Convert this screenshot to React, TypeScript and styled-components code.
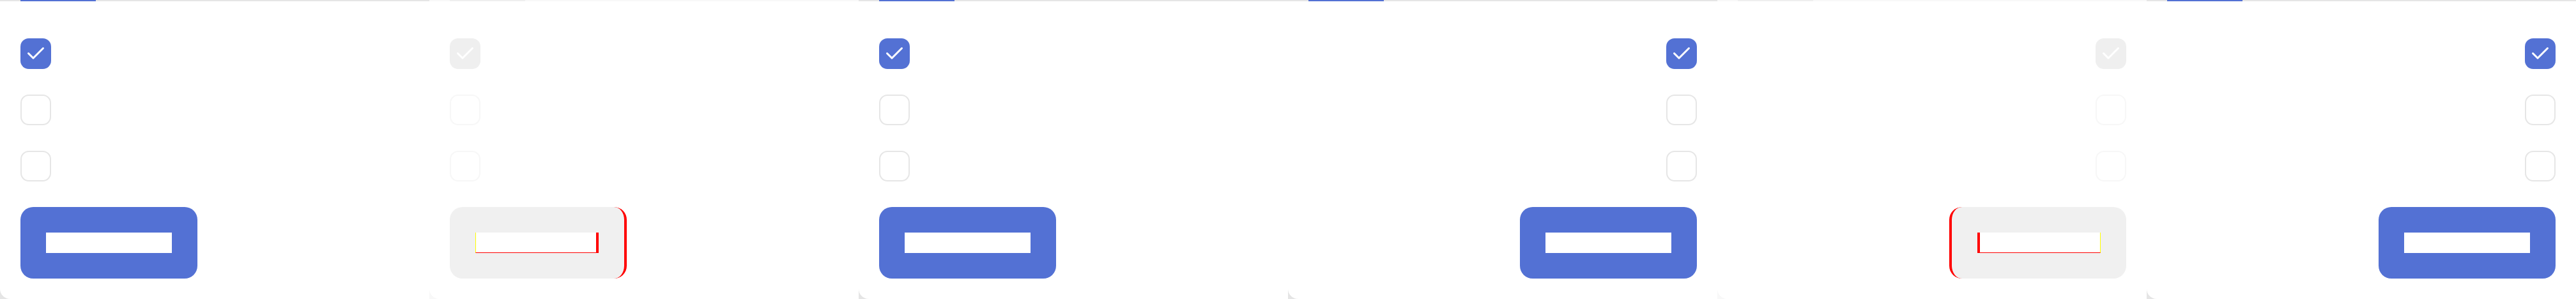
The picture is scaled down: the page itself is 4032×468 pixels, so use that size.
import React from "react";
import styled, { createGlobalStyle, css } from "styled-components";

const GlobalStyle = createGlobalStyle`
  html, body { margin: 0; padding: 0; background: #ffffff; }
  body { font-family: "Inter", "Liberation Sans", sans-serif; }
`;

const Row = styled.div`
  display: flex;
  width: 4032px;
  height: 468px;
`;

const Panel = styled.section<{ $muted: boolean }>`
  width: 672px;
  height: 468px;
  display: flex;
  flex-direction: column;
  background: ${(p) => (p.$muted ? "#f8f8f8" : "#e5e5e5")};
  flex-shrink: 0;
`;

const Track = styled.div<{ $muted: boolean }>`
  height: 2px;
  display: flex;
  direction: ltr;
  background: ${(p) => (p.$muted ? "#f8f8f8" : "#e5e5e5")};
`;

const Indicator = styled.div<{ $muted: boolean }>`
  margin-left: 32px;
  width: 118px;
  height: 2px;
  background: ${(p) => (p.$muted ? "#efefef" : "#5371d4")};
`;

const Card = styled.div`
  flex: 1;
  background: #ffffff;
  border-bottom-left-radius: 16px;
  display: flex;
  flex-direction: column;
  align-items: flex-start;
  padding: 58px 32px 0;
  gap: 40px;
`;

const Box = styled.span<{ $checked: boolean; $muted: boolean }>`
  box-sizing: border-box;
  width: 48px;
  height: 48px;
  border-radius: 13px;
  display: flex;
  align-items: center;
  justify-content: center;
  ${(p) =>
    p.$checked
      ? css`
          background: ${p.$muted ? "#efefef" : "#5371d4"};
        `
      : css`
          background: #ffffff;
          border: 2px solid ${p.$muted ? "#f7f7f7" : "#e6e6e6"};
        `}
`;

const Button = styled.button<{ $muted: boolean }>`
  box-sizing: border-box;
  width: 277px;
  height: 112px;
  padding: 40px;
  border: none;
  border-radius: 20px;
  display: flex;
  align-items: center;
  justify-content: flex-start;
  background: ${(p) => (p.$muted ? "#f0f0f0" : "#5371d4")};
  ${(p) =>
    p.$muted &&
    css`
      border-inline-end: 4px solid #ff0000;
    `}
`;

const Label = styled.span<{ $muted: boolean }>`
  box-sizing: border-box;
  display: block;
  width: 197px;
  height: 32px;
  background: #ffffff;
  ${(p) =>
    p.$muted &&
    css`
      border-bottom: 1px solid #ff0000;
      border-inline-end: 4px solid #ff0000;
      border-inline-start: 1px solid #ffff00;
    `}
`;

const Check = () => (
  <svg width="48" height="48" viewBox="0 0 48 48" fill="none">
    <polyline
      points="12.5,23.5 20,31 35.5,15.5"
      stroke="#ffffff"
      strokeWidth="3"
      strokeLinecap="round"
      strokeLinejoin="round"
    />
  </svg>
);

type Variant = { dir: "ltr" | "rtl"; muted: boolean };

const variants: Variant[] = [
  { dir: "ltr", muted: false },
  { dir: "ltr", muted: true },
  { dir: "ltr", muted: false },
  { dir: "rtl", muted: false },
  { dir: "rtl", muted: true },
  { dir: "rtl", muted: false },
];

const Demo = ({ dir, muted }: Variant) => (
  <Panel $muted={muted} dir={dir}>
    <Track $muted={muted}>
      <Indicator $muted={muted} />
    </Track>
    <Card>
      <Box $checked $muted={muted}>
        <Check />
      </Box>
      <Box $checked={false} $muted={muted} />
      <Box $checked={false} $muted={muted} />
      <Button $muted={muted} type="button">
        <Label $muted={muted} />
      </Button>
    </Card>
  </Panel>
);

export default function App() {
  return (
    <>
      <GlobalStyle />
      <Row>
        {variants.map((v, i) => (
          <Demo key={i} {...v} />
        ))}
      </Row>
    </>
  );
}
